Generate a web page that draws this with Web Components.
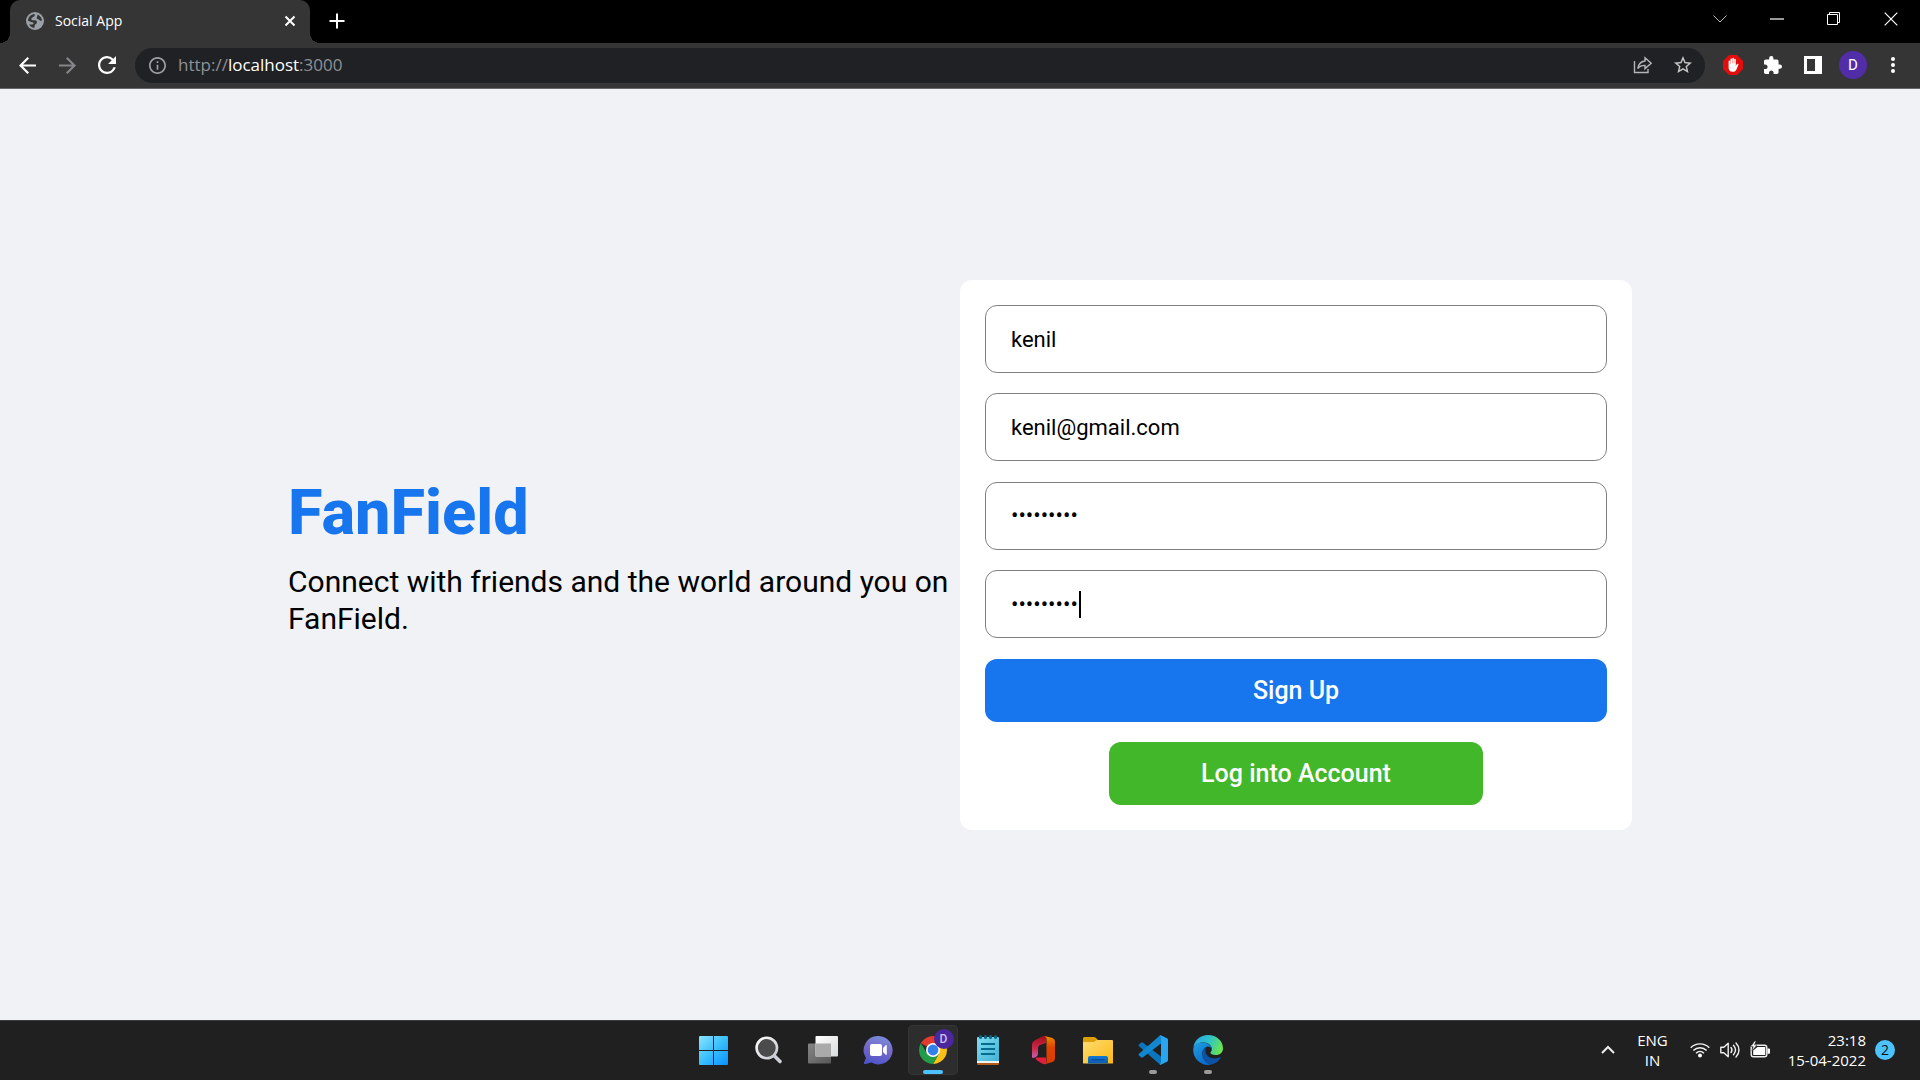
<!DOCTYPE html>
<html lang="en">
<head>
<meta charset="utf-8">
<title>Social App</title>
<style>
  html, body { margin: 0; height: 100%; }
  body { font-family: "Open Sans", "Noto Sans", sans-serif; background: #f0f2f5; }
</style>
</head>
<body>
<desk-screen></desk-screen>

<script>
const ICONS = {
  globe: ['0 0 18 18', `<circle cx="9" cy="9" r="9" fill="#9aa0a6"/><path d="M2 8.800C2.200 5 5 2.400 8.500 2c.6 1.300.2 2-.8 2.700C6.500 5.500 5.200 6 5.300 7.200c.1 1 1.500 1.100 3 1 1.800-.1 2.700.8 2.700 2 0 1.400-1.500 1.600-2 2.600-.4.900-.2 1.900-.8 3.100C5.800 15.600 4 14 3 12.200c1.500.3 3 .2 4 0 .8-.3.800-1.300 0-1.600C5.500 10 3.800 9.800 2 8.800zM11.500 2.500c2.500 1 4.300 3.400 4.500 6-1.200.5-2.300 0-3-.8-.6-.8-2-.4-2.300-1.500-.3-1.200 1.300-1.900.8-3.700z" fill="#353535"/>`],
  close: ['0 0 12 12', `<path d="M1.500 1.500l9 9m0-9l-9 9" stroke="#fff" stroke-width="2"/>`],
  plus: ['0 0 16 16', `<path d="M8 .5v15M.5 8h15" stroke="#fff" stroke-width="2"/>`],
  chevron: ['0 0 14 8', `<path d="M.5.5L7 7 13.500.5" fill="none" stroke="#bbb" stroke-width="1"/>`],
  minimise: ['0 0 14 2', `<path d="M0 1h14" stroke="#fff" stroke-width="1.200"/>`],
  restore: ['0 0 14 14', `<path d="M.5 2.500h10v10H.5zM2.500 2.500v-2h10v10h-2" fill="none" stroke="#fff"/>`],
  exit: ['0 0 14 14', `<path d="M.7.7l12.600 12.600m0-12.600L.7 13.300" stroke="#fff" stroke-width="1.200"/>`],
  back: ['4 4 16 16', `<path fill="#fff" d="M20 11H7.830l5.590-5.590L12 4l-8 8 8 8 1.410-1.410L7.830 13H20v-2z"/>`],
  forward: ['4 4 16 16', `<path fill="#85868a" d="M12 4l-1.410 1.410L16.170 11H4v2h12.170l-5.580 5.590L12 20l8-8z"/>`],
  reload: ['4 4 16 16', `<path fill="#fff" d="M17.650 6.350A7.958 7.958 0 0 0 12 4c-4.420 0-7.990 3.580-7.990 8s3.570 8 7.990 8c3.730 0 6.840-2.550 7.730-6h-2.080A5.990 5.990 0 0 1 12 18c-3.310 0-6-2.690-6-6s2.690-6 6-6c1.660 0 3.140.69 4.220 1.780L13 11h7V4l-2.350 2.350z"/>`],
  info: ['2 2 20 20', `<path fill="#9aa0a6" d="M11 7h2v2h-2zm0 4h2v6h-2zm1-9C6.480 2 2 6.480 2 12s4.480 10 10 10 10-4.480 10-10S17.520 2 12 2zm0 18c-4.410 0-8-3.590-8-8s3.590-8 8-8 8 3.590 8 8-3.590 8-8 8z"/>`],
  share: ['0 0 20 18', `<path d="M1.500 5v11.500h13.500V13M12 1.800l6.200 5.400L12 12.600V9.400c-3.200 0-5.500.8-7.200 3.200.5-4.200 2.800-7 7.200-7.600z" fill="none" stroke="#b4b5b8" stroke-width="1.400"/>`],
  star: ['2 2 20 20', `<path fill="#c4c7c5" d="M22 9.240l-7.190-.62L12 2 9.190 8.630 2 9.240l5.460 4.730L5.820 21 12 17.270 18.180 21l-1.630-7.030L22 9.240zM12 15.400l-3.760 2.270 1-4.280-3.320-2.880 4.380-.38L12 6.100l1.710 4.040 4.380.38-3.320 2.880 1 4.280L12 15.400z"/>`],
  block: ['0 0 20 20', `<path fill="#e40d0d" d="M6 0h8l6 6v8l-6 6H6l-6-6V6z"/><path fill="#fff" d="M5.600 11V6.300c0-1.200 1.500-1.200 1.500 0V9h.3V4.400c0-1.200 1.600-1.200 1.600 0V8.600h.3V3.600c0-1.200 1.600-1.200 1.600 0v5h.3V4.600c0-1.200 1.600-1.200 1.600 0v6.200l1-1.600c.7-1 2-.5 1.600.6l-2 4.700c-.7 1.600-1.700 2.300-3.700 2.300-2.800 0-4.100-1.800-4.100-4.300z"/>`],
  puzzle: ['2 1 21 21', `<path fill="#fff" d="M20.500 11H19V7c0-1.100-.9-2-2-2h-4V3.500a2.500 2.500 0 0 0-5 0V5H4c-1.100 0-1.990.9-1.990 2v3.800H3.500c1.490 0 2.700 1.210 2.700 2.700s-1.210 2.700-2.700 2.700H2V20c0 1.100.9 2 2 2h3.800v-1.500c0-1.490 1.210-2.700 2.700-2.700s2.700 1.210 2.700 2.700V22H17c1.100 0 2-.9 2-2v-4h1.500a2.500 2.500 0 0 0 0-5z"/>`],
  panel: ['0 0 18 18', `<path fill="#fff" fill-rule="evenodd" d="M0 0h18v18H0zM3 3v12h8V3z"/>`],
  dots: ['0 0 4 16', `<g fill="#fff"><circle cx="2" cy="2" r="2"/><circle cx="2" cy="8" r="2"/><circle cx="2" cy="14" r="2"/></g>`],
  up: ['0 0 14 9', `<path d="M1 8l6-6 6 6" fill="none" stroke="#eee" stroke-width="2"/>`],
  wifi: ['0 0 20 16', `<g fill="none" stroke="#f0f0f0" stroke-width="1.400"><path d="M.7 5.800c5.200-5.300 13.400-5.300 18.600 0M3.300 8.500c3.800-3.700 9.600-3.700 13.400 0M6 11.200c2.300-2.200 5.700-2.200 8 0"/></g><circle cx="10" cy="13.400" r="2" fill="#fff"/>`],
  sound: ['0 0 20 18', `<g fill="none" stroke="#f0f0f0" stroke-width="1.400" stroke-linecap="round"><path d="M.8 6.200h3l4.400-4v13.600l-4.400-4h-3z" stroke-linejoin="round"/><path d="M11 6.500c1.200 1.500 1.200 3.500 0 5M13.500 4.300c2.400 2.800 2.400 6.600 0 9.400M16 2c4 4.200 4 9.800 0 14"/></g>`],
  battery: ['0 0 20 17', `<rect x="1.200" y="4.200" width="15.600" height="11.600" rx="2.200" fill="none" stroke="#eee" stroke-width="1.400"/><path d="M3.200 14V9.600L7.500 6h7.800v8z" fill="#fff"/><path d="M17.500 7.500h1.700q.8 0 .8 1v3.300q0 1-.8 1h-1.700z" fill="#fff"/><path d="M4.600 0L1 5.600h2.200L2 10l5-6H4.400L6 0z" fill="#fff" stroke="#202020" stroke-width=".5"/>`],
  windows: ['0 0 30 30', `<defs><linearGradient id="w" x1="1" y1="1" x2="29" y2="29" gradientUnits="userSpaceOnUse"><stop stop-color="#8be4ff"/><stop offset=".5" stop-color="#3cc1fc"/><stop offset="1" stop-color="#0c92ff"/></linearGradient></defs><path fill="url(#w)" d="M2 1h13v14H1V2q0-1 1-1zM16 1h13q1 0 1 1v13H16zM1 16h14v14H2q-1 0-1-1zM16 16h14v13q0 1-1 1H16z"/>`],
  search: ['0 0 30 30', `<defs><linearGradient id="s" x1="0" y1="0" x2="1" y2="1"><stop stop-color="#fff"/><stop offset="1" stop-color="#c2c6cf"/></linearGradient></defs><path d="M21 20.500l6 6" stroke="#ced1d9" stroke-width="3.600" stroke-linecap="round"/><circle cx="13.800" cy="13" r="10.200" fill="#4b4b4b" stroke="url(#s)" stroke-width="2.600"/>`],
  tasks: ['0 0 30 30', `<defs><linearGradient id="t" x1="0" y1="0" x2="1" y2="1"><stop stop-color="#fff"/><stop offset="1" stop-color="#d9dadb"/></linearGradient><linearGradient id="u" x1="0" y1="0" x2="1" y2="1"><stop stop-color="#868686"/><stop offset="1" stop-color="#585858"/></linearGradient></defs><rect x="0" y="8.500" width="23" height="20" rx="1" fill="url(#u)"/><rect x="7.500" y="1" width="22.500" height="20.500" rx="1" fill="url(#t)"/><path d="M7.500 8.500H23v13H7.500z" fill="#aaa"/>`],
  chat: ['0 0 30 30', `<defs><linearGradient id="c" x1=".7" y1="0" x2=".4" y2="1"><stop stop-color="#778fdc"/><stop offset=".5" stop-color="#7767c6"/><stop offset="1" stop-color="#4e55cb"/></linearGradient></defs><path fill="url(#c)" d="M15.500 1a14.200 14.200 0 1 1-7 26.600L2.500 29q-2 .2-1.500-1.600L3 23A14.200 14.200 0 0 1 15.500 1z"/><rect x="7" y="9" width="12" height="12" rx="2" fill="#fff"/><path fill="#fff" d="M20 13l2.500-2.600q1.300-1 1.300.6v8q0 1.600-1.300.6L20 17z"/>`],
  chrome: ['0 0 28 28', `<path fill="#e33b2e" d="M14 14L1.880 7A14 14 0 0 1 26.120 7z"/><path fill="#fbc116" d="M14 7h12.120A14 14 0 0 1 14 28l6.060-10.500z"/><path fill="#229c48" d="M1.880 7A14 14 0 0 0 14 28l6.060-10.500L14 14l-6.060 3.500z"/><circle cx="14" cy="14" r="7" fill="#fff"/><circle cx="14" cy="14" r="5.400" fill="#3380ec"/>`],
  notepad: ['0 0 30 30', `<defs><linearGradient id="n" x1="0" y1="0" x2="1" y2="1"><stop stop-color="#82ddf1"/><stop offset="1" stop-color="#40b2d6"/></linearGradient></defs><path fill="#b05d1c" d="M4 26h22v3q0 1-1 1H5q-1 0-1-1z"/><path fill="#f2f2f2" d="M4 25h22v3H4z"/><path fill="url(#n)" d="M5 2h20q1 0 1 1v23H4V3q0-1 1-1z"/><g fill="#0a6887"><rect x="6" y="0" width="3" height="4" rx="1.500"/><rect x="11" y="0" width="3" height="4" rx="1.500"/><rect x="16" y="0" width="3" height="4" rx="1.500"/><rect x="21" y="0" width="3" height="4" rx="1.500"/></g><path d="M8 9h14M8 14h14M8 19h14" stroke="#066b8d" stroke-width="2"/>`],
  office: ['0 0 30 30', `<defs><linearGradient id="o" x1="0" y1="0" x2="0" y2="1"><stop stop-color="#a20d1b"/><stop offset=".6" stop-color="#cf2c4f"/><stop offset="1" stop-color="#c264b4"/></linearGradient><linearGradient id="p" x1="0" y1="0" x2="0" y2="1"><stop stop-color="#f58a00"/><stop offset=".4" stop-color="#dd4500"/><stop offset="1" stop-color="#d93a00"/></linearGradient></defs><path fill="url(#o)" d="M18 1v7l-6 2q-2 1-2 3v6q0 2-2.500 3.200L5 23q-1 0-1-1.500V9.500Q4 7 6.500 5.500L14 1.600q2-1 4-.6z"/><path fill="#e51c3c" d="M8 22.500h10V29q-2 .6-4-.6l-5.500-3.400q-1.500-1.200-.5-2.500z"/><path fill="url(#p)" d="M16.500 1l8 2Q27 4 27 6.500v17q0 2.500-2.500 3.400L17.500 29q1-1 1-3V4q0-2-2-3z"/>`],
  folder: ['0 0 30 30', `<defs><linearGradient id="f" x1="0" y1="0" x2="1" y2="1"><stop stop-color="#ffdd73"/><stop offset="1" stop-color="#fcb813"/></linearGradient><linearGradient id="g" x1="0" y1="0" x2="0" y2="1"><stop stop-color="#1379d4"/><stop offset="1" stop-color="#0a5cb1"/></linearGradient></defs><path fill="#dfa007" d="M1.500 2h9q1.500 0 2.500 1l2 2v5H0V3.500Q0 2 1.500 2z"/><path fill="url(#f)" d="M0 7h11l3-2h15q1 0 1 1v22q0 .6-.8.6H.8Q0 28.600 0 28z"/><path fill="url(#g)" d="M5 28.600V23q0-2 2-2h16q2 0 2 2v5.600z"/><path d="M8.500 24.800h13" stroke="#0c4a91" stroke-width="1.200"/>`],
  code: ['0 0 30 30', `<path fill="#0b75bd" d="M1 9.500l2-1.800q1-.7 2 0L23 21.600V29.500q-1 .2-2-.7L.8 11q-.7-.8.2-1.500z"/><path fill="#1287d0" d="M1 20.500l2 1.800q1 .7 2 0L23 8.400V.5q-1-.2-2 .7L.8 19q-.7.8.2 1.500z"/><path fill="#28a6f2" d="M21.400 29.200Q23 29 23 27V3q0-2-1.600-2.200Q22.300 0 23.300.5L29 3.200q1 .6 1 1.800v20q0 1.200-1 1.800l-5.700 2.700q-1 .5-1.900-.3z"/>`],
  edge: ['0 0 30 30', `<defs><linearGradient id="e1" x1="0" y1=".3" x2="1" y2=".6"><stop stop-color="#28a9e8"/><stop offset=".5" stop-color="#30c4c6"/><stop offset="1" stop-color="#6de64a"/></linearGradient><linearGradient id="e2" x1="0" y1="0" x2=".6" y2="1"><stop stop-color="#1f9fe2"/><stop offset="1" stop-color="#0b69ca"/></linearGradient></defs><path fill="url(#e1)" d="M.2 13C1.300 5 7.500 0 15 0c8.600 0 15 6 15 13.200 0 4-3 6.800-7.200 6.800-3.500 0-5.400-1.200-5.400-2.200 0-.7 1.400-1.400 1.400-3.800 0-4-4-6.500-8.300-6.500C6 7.500 2 9.500.2 13z"/><path fill="url(#e2)" d="M.2 15C.2 11 4 7.500 9.500 7.500c5 0 9.100 3 9.300 6.400-1.300-2-3.100-2.600-4.800-2.200-3 .8-4.800 3.800-4.600 7.300.3 5.300 3.800 9 9 10.600C8.600 31.800.2 24 .2 15z"/><path fill="#0c53a5" d="M13.300 12c-2.600.8-4.100 3.800-3.900 7 .3 5.300 3.800 9 9 10.600 4-1 7.300-3.300 9.200-6.600.4-.6-.1-1-.7-.7-6.300 3-14.500-.2-14.500-6.600 0-1.400.3-2.700.9-3.700z"/>`]
};

const define = (tag, css, html) => customElements.define(tag, class extends HTMLElement {
  connectedCallback() {
    if (this.shadowRoot) return;
    this.attachShadow({ mode: 'open' }).innerHTML =
      `<style>*{box-sizing:border-box}:host{box-sizing:border-box}button,input{font:inherit;color:inherit;margin:0}button{border:0;padding:0;background:none;display:grid;place-items:center}${css}</style>` +
      (typeof html === 'function' ? html(this) : html);
  }
});

/* <ui-icon name w h> : inline vector icon */
define('ui-icon', ':host{display:block;flex:none}svg{display:block;overflow:visible}', el => {
  const [box, body] = ICONS[el.getAttribute('name')];
  return `<svg aria-hidden="true" viewBox="${box}" width="${el.getAttribute('w')}" height="${el.getAttribute('h')}">${body}</svg>`;
});

const icon = (name, w, h = w) => `<ui-icon name="${name}" w="${w}" h="${h}"></ui-icon>`;

define('tab-strip', `
  :host{display:flex;height:43px;padding:0 1px 0 10px;background:#000;color:#fff;font-size:14px}
  .tab{position:relative;display:flex;align-items:center;width:300px;padding:0 12px 2px 16px;background:#353535;border-radius:10px 10px 0 0}
  .tab::before,.tab::after{content:"";position:absolute;bottom:0;width:10px;height:10px}
  .tab::before{right:100%;background:radial-gradient(circle at 0 0,#000 10px,#353535 10px)}
  .tab::after{left:100%;background:radial-gradient(circle at 100% 0,#000 10px,#353535 10px)}
  .name{flex:1;padding-left:11px;line-height:20px}
  .x{width:16px;height:16px}
  .new{width:32px;height:42px;margin-left:11px}
  .win{display:flex;margin-left:auto}
  .win button{width:57px;height:37px}
`, `<div class="tab">${icon('globe', 18)}<span class="name">Social App</span><button class="x" aria-label="Close tab">${icon('close', 12)}</button></div>
  <button class="new" aria-label="New tab">${icon('plus', 16)}</button>
  <div class="win"><button aria-label="Search tabs">${icon('chevron', 14, 8)}</button><button aria-label="Minimise">${icon('minimise', 14, 2)}</button><button aria-label="Restore">${icon('restore', 14)}</button><button aria-label="Close">${icon('exit', 14)}</button></div>`);

define('nav-bar', `
  :host{display:flex;align-items:center;height:46px;padding:0 7px 1px;background:#353535;border-bottom:1px solid #66676a;color:#fff}
  button{width:40px;height:36px}
  .omni{flex:1;display:flex;align-items:center;height:35px;margin:0 8px;padding:0 2px 0 14px;border-radius:18px;background:#202124}
  .url{flex:1;width:auto;display:block;text-align:left;padding-left:12px;font-size:17px;line-height:24px;height:24px;color:#8e9195}
  .url b{font-weight:400;color:#fff}
  .me{display:grid;place-items:center;width:28px;height:28px;border-radius:50%;background:#512da8;font-size:15px;line-height:20px;font-family:Roboto,sans-serif}
`, `<button aria-label="Back">${icon('back', 17)}</button><button aria-label="Forward">${icon('forward', 17)}</button><button aria-label="Reload">${icon('reload', 18)}</button>
  <div class="omni">${icon('info', 17)}<button class="url" title="Address bar">http://<b>localhost</b>:3000</button><button aria-label="Share">${icon('share', 20, 18)}</button><button aria-label="Bookmark">${icon('star', 18)}</button></div>
  <button aria-label="Ad blocker">${icon('block', 20)}</button><button aria-label="Extensions">${icon('puzzle', 18)}</button><button aria-label="Side panel">${icon('panel', 18)}</button><button aria-label="Profile"><span class="me">D</span></button><button aria-label="Menu">${icon('dots', 4, 16)}</button>`);

/* <text-field label type value focused> */
define('text-field', `
  :host{display:block;position:relative}
  input{display:block;width:100%;height:68px;padding:0 25px;border:1px solid #808080;border-radius:12px;background:#fff;color:#000;font:22px Roboto,sans-serif;outline:0}
  .caret{position:absolute;left:94px;top:21px;width:2px;height:27px;background:#000}
`, el => `<input aria-label="${el.getAttribute('label')}" type="${el.getAttribute('type')}" value="${el.getAttribute('value')}">${el.hasAttribute('focused') ? '<span class="caret"></span>' : ''}`);

define('push-button', `
  :host{display:block}
  button{width:100%;height:63px;padding-top:1px;border-radius:12px;background:var(--fill);color:#fff;font:500 25px Roboto,sans-serif}
`, '<button type="button"><slot></slot></button>');

define('brand-intro', `
  :host{display:block;padding-top:2px;font-family:Roboto,sans-serif}
  h1{margin:0 0 14px;font-size:63px;line-height:73px;font-weight:800;color:#1775ee}
  p{margin:0;font-size:30px;line-height:37px;color:#000}
`, '<h1>FanField</h1><p>Connect with friends and the world around you on FanField.</p>');

define('sign-up-card', `
  :host{display:block}
  form{display:flex;flex-direction:column;justify-content:space-between;min-height:550px;padding:25px;border-radius:12px;background:#fff}
  .up{--fill:#1775ee}
  .in{--fill:#42b72a;width:60%;align-self:center}
`, `<form><text-field label="Username" type="text" value="kenil"></text-field>
  <text-field label="Email" type="email" value="kenil@gmail.com"></text-field>
  <text-field label="Password" type="password" value="kenil1234"></text-field>
  <text-field label="Password again" type="password" value="kenil1234" focused></text-field>
  <push-button class="up">Sign Up</push-button><push-button class="in">Log into Account</push-button></form>`);

define('sign-up-page', `
  :host{flex:1;display:grid;place-items:center;padding-top:1px;background:#f0f2f5}
  main{width:70%;display:grid;grid-template-columns:1fr 1fr;align-items:center}
`, '<main><brand-intro></brand-intro><sign-up-card></sign-up-card></main>');

define('task-button', `
  :host{display:block}
  button{position:relative;width:50px;height:50px;border-radius:5px}
  :host([active]) button{background:#2d2d2d;box-shadow:inset 0 0 0 1px #353535}
  .run{position:absolute;bottom:1px;left:21px;width:8px;height:4px;border-radius:2px;background:#9a9a9a}
  :host([active]) .run{left:15px;width:20px;background:#4cc2ff}
  .who{position:absolute;left:26px;top:4px;width:20px;height:20px;border-radius:50%;background:#4a279c;color:#cdbff0;font:500 12px/20px Roboto,sans-serif;text-align:center}
`, el => `<button aria-label="${el.getAttribute('label')}">${icon(el.getAttribute('icon'), el.getAttribute('size') || 30)}${el.hasAttribute('user') ? `<span class="who">${el.getAttribute('user')}</span>` : ''}${el.hasAttribute('running') ? '<span class="run"></span>' : ''}</button>`);

define('system-tray', `
  :host{display:flex;align-items:center;justify-content:flex-end;padding-right:25px;color:#fff;font-size:15px;line-height:20px}
  .lang{margin-left:22px;text-align:center}
  .status{display:flex;align-items:center;gap:10px;margin-left:22px}
  .clock{margin-left:18px;text-align:right}
  .count{width:20px;height:20px;margin-left:9px;border-radius:50%;background:#4cc2ff;color:#111;font-size:14px;text-align:center}
`, `<button aria-label="Hidden icons">${icon('up', 14, 9)}</button><div class="lang">ENG<br>IN</div>
  <div class="status">${icon('wifi', 20, 16)}${icon('sound', 20, 18)}${icon('battery', 20, 17)}</div>
  <div class="clock">23:18<br>15-04-2022</div><div class="count">2</div>`);

define('task-bar', `
  :host{display:grid;grid-template-columns:1fr auto 1fr;align-items:center;height:60px;padding-bottom:2px;background:#202020;border-top:1px solid #393d40}
  nav{display:flex;gap:5px;grid-column:2}
  system-tray{grid-column:3}
`, `<nav><task-button label="Start" icon="windows"></task-button><task-button label="Search" icon="search"></task-button><task-button label="Task view" icon="tasks"></task-button><task-button label="Chat" icon="chat"></task-button><task-button label="Chrome" icon="chrome" size="28" user="D" active running></task-button><task-button label="Notepad" icon="notepad"></task-button><task-button label="Office" icon="office"></task-button><task-button label="File Explorer" icon="folder"></task-button><task-button label="Visual Studio Code" icon="code" running></task-button><task-button label="Edge" icon="edge" running></task-button></nav><system-tray></system-tray>`);

define('desk-screen', ':host{display:flex;flex-direction:column;min-height:100vh}',
  '<tab-strip></tab-strip><nav-bar></nav-bar><sign-up-page></sign-up-page><task-bar></task-bar>');
</script>
</body>
</html>
